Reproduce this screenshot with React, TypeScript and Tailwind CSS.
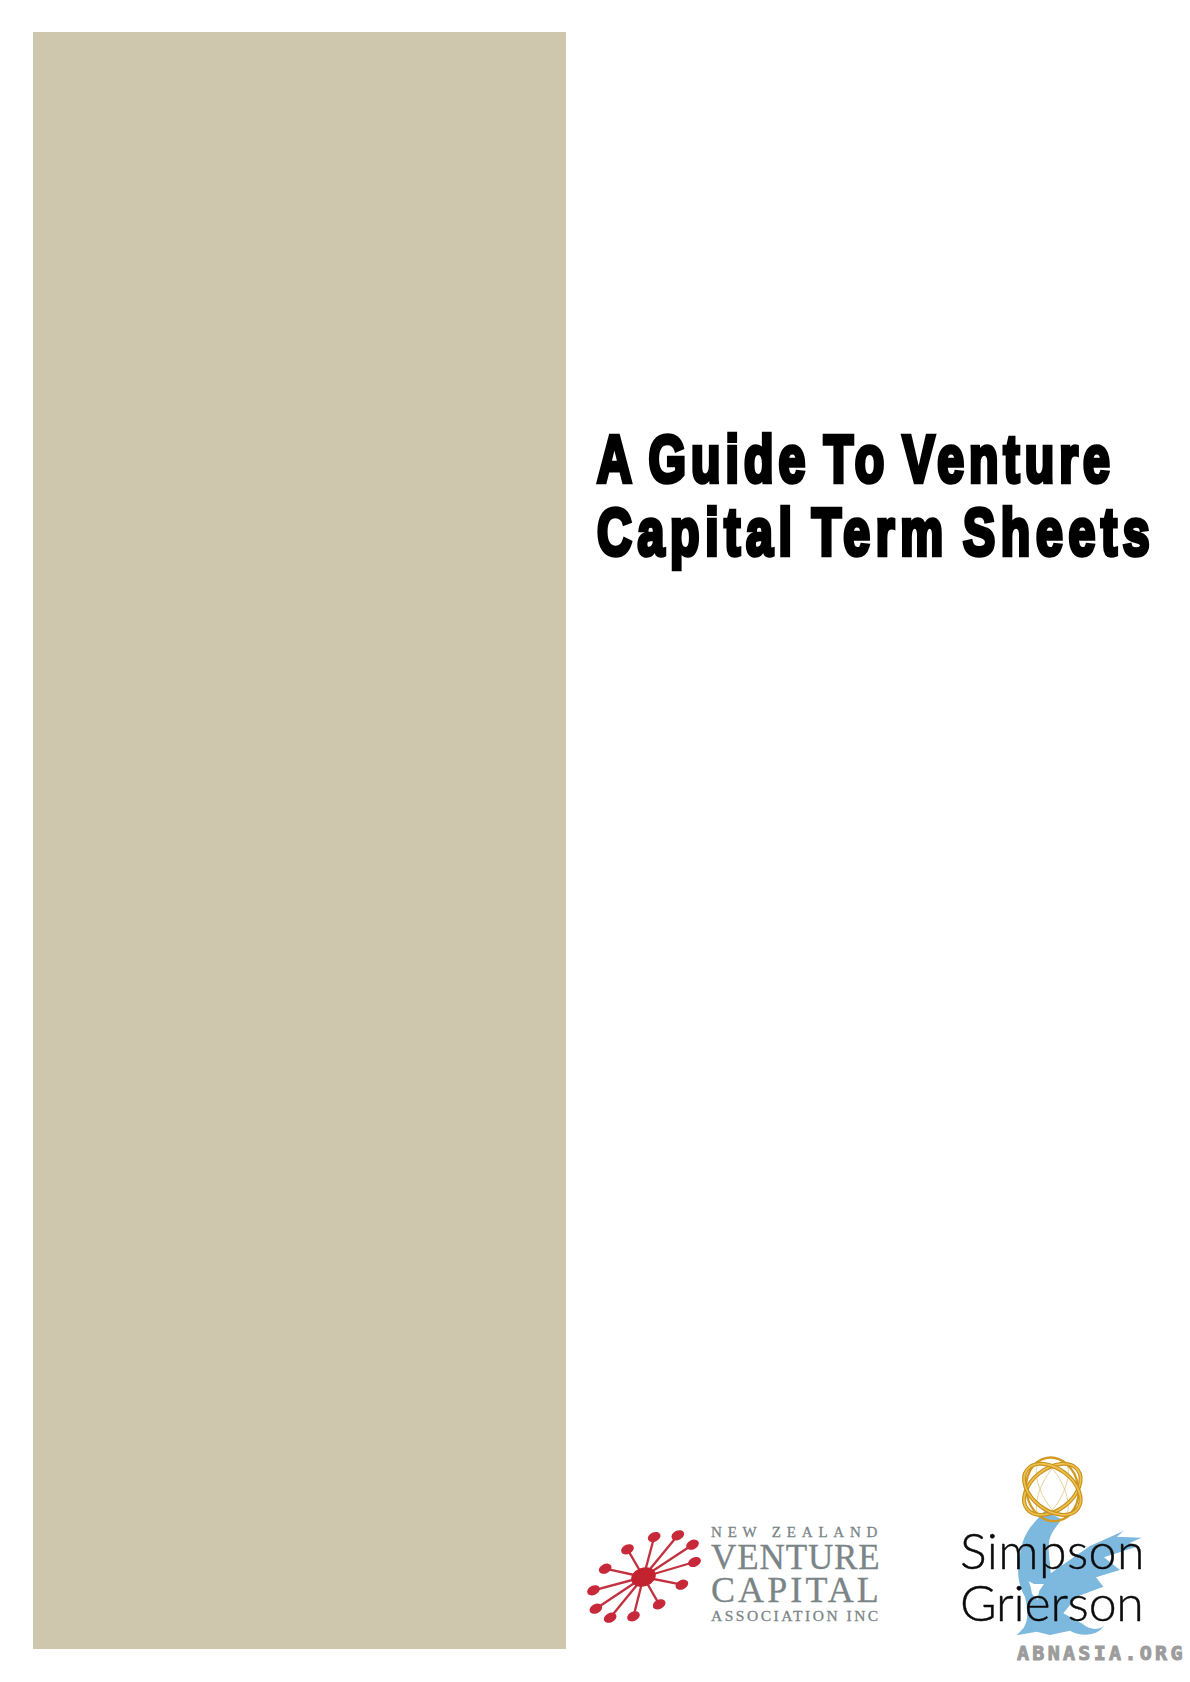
import React from "react";

const spokes = [
	[247, 170],
	[318, 165],
	[362, 193],
	[368, 245],
	[330, 313],
	[262, 372],
	[185, 408],
	[115, 412],
	[72, 385],
	[65, 330],
	[100, 265],
	[167, 207],
];

function StarMark() {
	const cx = 215;
	const cy = 290;
	return (
		<svg width="117" height="100" viewBox="40 140 350 300" className="shrink-0">
			{spokes.map(([x, y]) => (
				<g key={`${x}-${y}`}>
					<line x1={cx} y1={cy} x2={x} y2={y} stroke="#c2313f" strokeWidth="7" />
					<ellipse cx={x} cy={y} rx="20" ry="14" fill="#c7293a" transform={`rotate(-25 ${x} ${y})`} />
				</g>
			))}
			<ellipse cx={cx} cy={cy} rx="38" ry="28" fill="#c2232f" transform={`rotate(-20 ${cx} ${cy})`} />
		</svg>
	);
}

function VentureLogo() {
	return (
		<div className="flex items-start ml-[19px] mb-[55px]">
			<StarMark />
			<div className="ml-[9px] w-[170px] text-[#7b8587] font-['Liberation_Serif',serif] whitespace-nowrap -mt-[5px] [-webkit-text-stroke:0.3px_#7b8587]">
				<div className="text-[15px] leading-[20px] tracking-[5.8px]">NEW ZEALAND</div>
				<div className="text-[35px] leading-[32px] tracking-[0.9px]">VENTURE</div>
				<div className="text-[36px] leading-[32px] tracking-[3.1px]">CAPITAL</div>
				<div className="text-[15.5px] leading-[20px] tracking-[2.5px]">ASSOCIATION INC</div>
			</div>
		</div>
	);
}

function GriersonArt() {
	return (
		<svg width="260" height="242" viewBox="0 0 780 726" className="absolute inset-0">
			<path
				fill="#7db9de"
				d="M345 212 C320 240 285 270 275 320 C262 370 256 420 285 470 C295 510 295 545 280 565 L260 586 L320 575 L360 585 L420 572 C450 590 500 590 522 558 C505 570 480 572 455 550 L400 520 L440 470 L520 440 L498 412 L570 390 L522 352 L620 320 L600 308 L635 293 L560 290 L582 272 L480 318 L362 400 C362 372 352 330 358 300 C366 270 385 255 395 238 Z"
			/>
			<path fill="#ffffff" d="M296 424 L312 432 L342 432 L328 452 L322 480 L306 462 L302 440 Z" />
			<g fill="none" strokeLinecap="round">
				<ellipse cx="367" cy="148" rx="88" ry="34" strokeWidth="2" stroke="#dfc27a" transform="rotate(65 367 148)" />
				<ellipse cx="367" cy="148" rx="88" ry="34" strokeWidth="2" stroke="#dfc27a" transform="rotate(115 367 148)" />
				<ellipse cx="367" cy="148" rx="96" ry="78" strokeWidth="7" stroke="#d39a22" transform="rotate(80 367 148)" />
				<ellipse cx="367" cy="148" rx="96" ry="62" strokeWidth="12" stroke="#c8921f" transform="rotate(-38 367 148)" />
				<ellipse cx="367" cy="148" rx="96" ry="62" strokeWidth="5" stroke="#efc24d" transform="rotate(-38 367 148)" />
				<ellipse cx="367" cy="148" rx="96" ry="62" strokeWidth="12" stroke="#c8921f" transform="rotate(38 367 148)" />
				<ellipse cx="367" cy="148" rx="96" ry="62" strokeWidth="5" stroke="#efc24d" transform="rotate(38 367 148)" />
			</g>
		</svg>
	);
}

function GriersonLogo() {
	return (
		<div className="relative w-[260px] h-[242px] shrink-0">
			<GriersonArt />
			<div className="relative pt-[84px] pl-[30px] font-['Lato',sans-serif] font-light text-[50px] leading-[52px] tracking-[0.4px] text-[#0b0b0b] [-webkit-text-stroke:0.4px_#0b0b0b]">
				<div>Simpson</div>
				<div className="tracking-[-0.2px]">Grierson</div>
			</div>
			<div className="absolute top-[201px] left-[87px] font-['DejaVu_Sans_Mono',monospace] font-bold text-[20px] leading-[24px] tracking-[3.3px] text-[#9c9c9c] whitespace-nowrap [-webkit-text-stroke:1px_#9c9c9c]">
				ABNASIA.ORG
			</div>
		</div>
	);
}

export default function App() {
	return (
		<div className="flex h-[1682px] w-[1190px] overflow-hidden bg-white">
			<div className="mt-[32px] ml-[33px] h-[1617px] w-[533px] shrink-0 bg-[#cfc6ae]"></div>
			<div className="flex flex-col flex-1 min-w-0">
				<h1 className="mt-[422px] ml-[31px] font-['Liberation_Sans',sans-serif] font-bold text-[67px] leading-[73px] tracking-[7.9px] [word-spacing:-7px] text-black whitespace-nowrap [-webkit-text-stroke:4.5px_black] scale-x-[0.72] origin-left">
					<div className="tracking-[7px]">A Guide To Venture</div>
					<div>Capital Term Sheets</div>
				</h1>
				<div className="flex items-end justify-between mt-auto">
					<VentureLogo />
					<GriersonLogo />
				</div>
			</div>
		</div>
	);
}
